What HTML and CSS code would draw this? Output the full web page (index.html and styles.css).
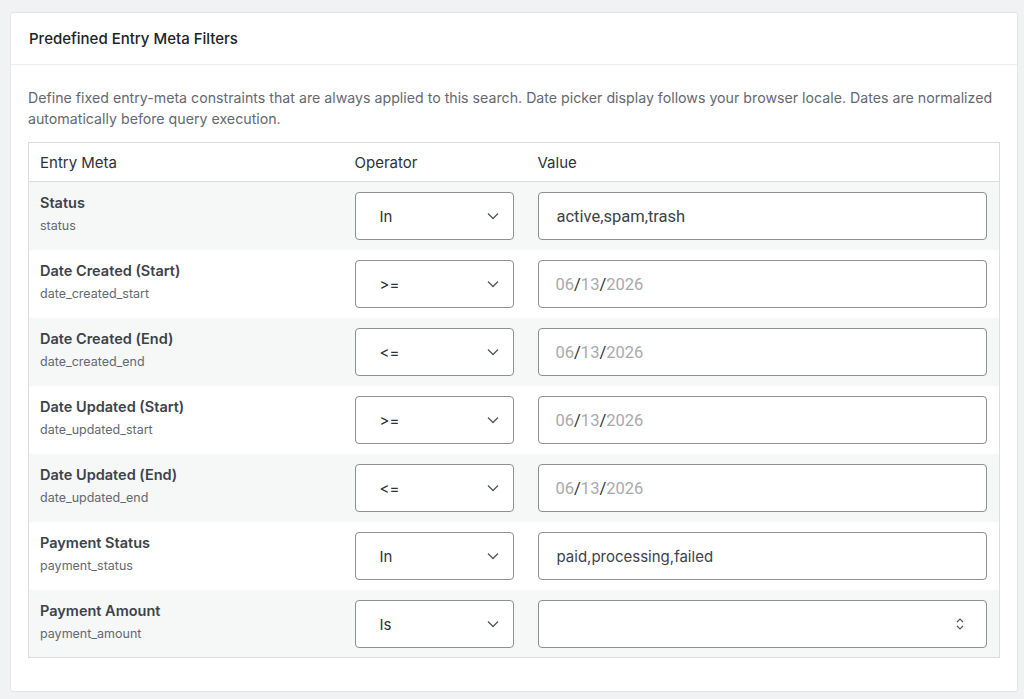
FILE: index.html
```html
<!doctype html>
<html>
<head>
    <meta charset="utf-8">
    <title>Predefined Entry Meta Filters</title>
    <link rel="stylesheet" href="styles.css">
</head>
<body>
<div class="panel">
    <div class="panel-head">Predefined Entry Meta Filters</div>
    <div class="panel-body">
        <p class="desc">Define fixed entry-meta constraints that are always applied to this search. Date picker display follows your browser locale. Dates are normalized automatically before query execution.</p>
        <table class="filters">
            <colgroup>
                <col class="c-meta">
                <col class="c-op">
                <col class="c-val">
            </colgroup>
            <thead>
            <tr>
                <th>Entry Meta</th>
                <th>Operator</th>
                <th>Value</th>
            </tr>
            </thead>
            <tbody>
            <tr>
                <td><div class="lbl">Status</div><div class="key">status</div></td>
                <td><div class="sel">In<svg viewBox="0 0 12 8"><path d="M1 1.5l5 5 5-5"/></svg></div></td>
                <td><div class="inp">active,spam,trash</div></td>
            </tr>
            <tr>
                <td><div class="lbl">Date Created (Start)</div><div class="key">date_created_start</div></td>
                <td><div class="sel">&gt;=<svg viewBox="0 0 12 8"><path d="M1 1.5l5 5 5-5"/></svg></div></td>
                <td><div class="inp date"><span>06</span>/<span>13</span>/<span>2026</span></div></td>
            </tr>
            <tr>
                <td><div class="lbl">Date Created (End)</div><div class="key">date_created_end</div></td>
                <td><div class="sel">&lt;=<svg viewBox="0 0 12 8"><path d="M1 1.5l5 5 5-5"/></svg></div></td>
                <td><div class="inp date"><span>06</span>/<span>13</span>/<span>2026</span></div></td>
            </tr>
            <tr>
                <td><div class="lbl">Date Updated (Start)</div><div class="key">date_updated_start</div></td>
                <td><div class="sel">&gt;=<svg viewBox="0 0 12 8"><path d="M1 1.5l5 5 5-5"/></svg></div></td>
                <td><div class="inp date"><span>06</span>/<span>13</span>/<span>2026</span></div></td>
            </tr>
            <tr>
                <td><div class="lbl">Date Updated (End)</div><div class="key">date_updated_end</div></td>
                <td><div class="sel">&lt;=<svg viewBox="0 0 12 8"><path d="M1 1.5l5 5 5-5"/></svg></div></td>
                <td><div class="inp date"><span>06</span>/<span>13</span>/<span>2026</span></div></td>
            </tr>
            <tr>
                <td><div class="lbl">Payment Status</div><div class="key">payment_status</div></td>
                <td><div class="sel">In<svg viewBox="0 0 12 8"><path d="M1 1.5l5 5 5-5"/></svg></div></td>
                <td><div class="inp wide">paid,processing,failed</div></td>
            </tr>
            <tr>
                <td><div class="lbl">Payment Amount</div><div class="key">payment_amount</div></td>
                <td><div class="sel">Is<svg viewBox="0 0 12 8"><path d="M1 1.5l5 5 5-5"/></svg></div></td>
                <td><div class="inp num"><svg class="spin" viewBox="0 0 10 16"><path d="M2 6l3-3 3 3M2 10l3 3 3-3"/></svg></div></td>
            </tr>
            </tbody>
        </table>
    </div>
</div>
</body>
</html>
```
FILE: styles.css
```css
body {
    margin: 0;
    background: #f0f2f4;
    font-family: Inter, "Noto Sans", sans-serif;
    color: #1d2327;
    padding: 12px 6px 9px 10px;
}

.panel {
    background: #fff;
    border: 1px solid #e2e4e7;
    border-radius: 3px;
}

.panel-head {
    height: 51px;
    line-height: 51px;
    padding-left: 18px;
    font-size: 15px;
    font-weight: 500;
    border-bottom: 1px solid #eceef0;
}

.panel-body {
    padding: 22px 18px 33px 17px;
}

.desc {
    margin: 0 0 13px 0;
    font-size: 14.2px;
    line-height: 21px;
    color: #646970;
}

.filters {
    width: 972px;
    border-collapse: collapse;
    border: 1px solid #dcdcde;
    table-layout: fixed;
}

.c-meta { width: 316px; }
.c-op { width: 183px; }

.filters th {
    text-align: left;
    font-weight: 400;
    font-size: 15px;
    color: #2c3338;
    height: 38px;
    padding: 0 10px;
    border-bottom: 1px solid #dcdcde;
    background: #fff;
}

.filters th:first-child { padding-left: 11px; }

.filters td {
    padding: 10px 12px 10px 10px;
    vertical-align: middle;
}

.filters td:first-child {
    padding-left: 11px;
    vertical-align: top;
    padding-top: 12px;
}

.filters tbody tr:nth-child(odd) { background: #f6f7f7; }

.filters tbody tr:last-child td { padding-bottom: 9px; }

.lbl {
    font-size: 14.5px;
    font-weight: 600;
    color: #3c434a;
    line-height: 18px;
}

.key {
    font-size: 12.5px;
    color: #646970;
    margin-top: 6px;
}

.sel {
    width: 159px;
    height: 48px;
    box-sizing: border-box;
    border: 1px solid #8c8f94;
    border-radius: 4px;
    background: #fff;
    display: flex;
    align-items: center;
    justify-content: space-between;
    padding: 0 14px 0 24px;
    font-size: 15px;
    color: #2c3338;
}

.sel svg {
    width: 12px;
    height: 8px;
    fill: none;
    stroke: #50575e;
    stroke-width: 1.3;
}

.inp {
    height: 48px;
    box-sizing: border-box;
    border: 1px solid #8c8f94;
    border-radius: 4px;
    background: #fff;
    display: flex;
    align-items: center;
    padding: 0 18px;
    font-family: Roboto, sans-serif;
    font-size: 16.5px;
    color: #3c434a;
}

.inp.wide {
    font-family: Inter, sans-serif;
    font-size: 15px;
}

.inp.date { padding-left: 17px; color: #2c3338; }
.inp.date span { color: #a7aaad; }

.inp.num { justify-content: flex-end; padding-right: 21px; }

.spin {
    width: 10px;
    height: 16px;
    fill: none;
    stroke: #50575e;
    stroke-width: 1.2;
}
```
